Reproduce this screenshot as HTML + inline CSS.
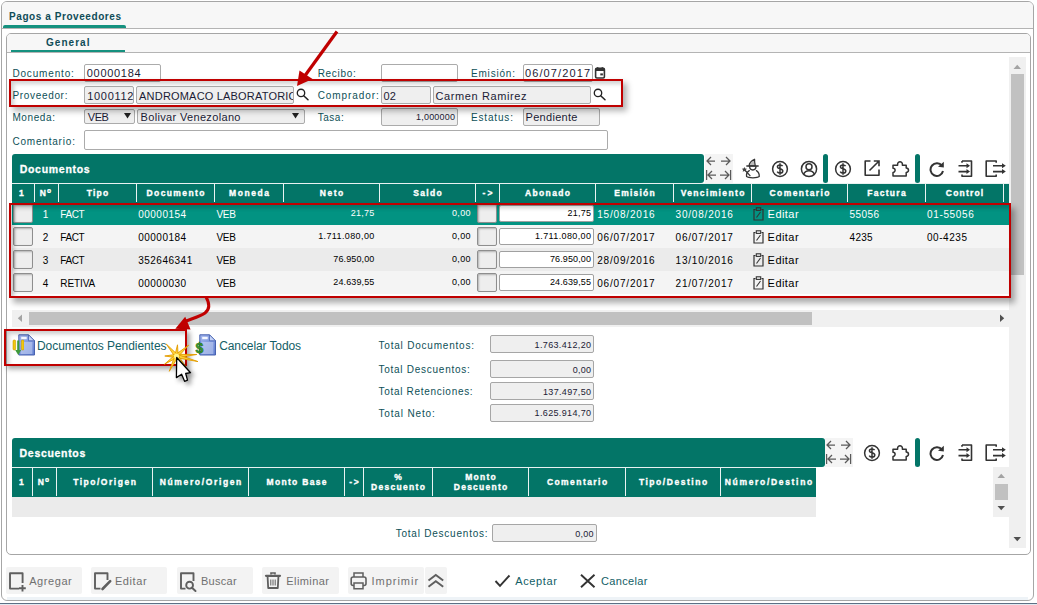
<!DOCTYPE html><html><head><meta charset="utf-8"><style>
html,body{margin:0;padding:0;background:#fff;width:1037px;height:605px;overflow:hidden;position:relative}
body>div,body>svg{position:absolute}
div{box-sizing:border-box}
.t{white-space:pre;font-family:"Liberation Sans",sans-serif}
</style></head><body>
<div style="position:absolute;left:1px;top:1px;width:1033px;height:600px;border:1px solid #a6a6a6;border-radius:6px;background:#fff;box-sizing:border-box"></div>
<div style="position:absolute;left:2px;top:2px;width:1031px;height:26px;background:#f7f7f7;border-radius:5px 5px 0 0"></div>
<div style="position:absolute;left:2px;top:28px;width:1031px;height:1px;background:#b4b4b4"></div>
<div style="position:absolute;left:3px;top:25px;width:123px;height:3px;background:#15917f;border-radius:2px 2px 0 0"></div>
<div class="t" style="position:absolute;left:9.00px;top:11.54px;font-size:10px;line-height:10px;font-weight:bold;color:#0f4c57;letter-spacing:0.572px;">Pagos a Proveedores</div>
<div style="position:absolute;left:7px;top:597px;width:1021px;height:3px;background:#eef3f7"></div>
<div style="position:absolute;left:0px;top:603px;width:1037px;height:1px;background:#5d7085"></div>
<div style="position:absolute;left:0px;top:604px;width:1037px;height:1px;background:#e2e9f0"></div>
<div style="position:absolute;left:0px;top:601px;width:1037px;height:2px;background:#ffffff"></div>
<div style="position:absolute;left:6px;top:33px;width:1025px;height:522px;border:1px solid #a6a6a6;border-radius:5px;background:#fff;box-sizing:border-box"></div>
<div style="position:absolute;left:7px;top:34px;width:1023px;height:18px;background:#f7f7f7;border-radius:4px 4px 0 0"></div>
<div style="position:absolute;left:7px;top:52px;width:1023px;height:1px;background:#b4b4b4"></div>
<div style="position:absolute;left:11px;top:50px;width:114px;height:2px;background:#15917f"></div>
<div class="t" style="position:absolute;left:46.00px;top:38.24px;font-size:10px;line-height:10px;font-weight:bold;color:#0f4c57;letter-spacing:1.042px;">General</div>
<div class="t" style="position:absolute;left:12.40px;top:69.33px;font-size:10px;line-height:10px;font-weight:normal;color:#0d5057;letter-spacing:0.844px;">Documento:</div>
<div class="t" style="position:absolute;left:12.40px;top:91.33px;font-size:10px;line-height:10px;font-weight:normal;color:#0d5057;letter-spacing:0.678px;">Proveedor:</div>
<div class="t" style="position:absolute;left:12.40px;top:113.44px;font-size:10px;line-height:10px;font-weight:normal;color:#0d5057;letter-spacing:0.600px;">Moneda:</div>
<div class="t" style="position:absolute;left:12.40px;top:136.53px;font-size:10px;line-height:10px;font-weight:normal;color:#0d5057;letter-spacing:0.805px;">Comentario:</div>
<div class="t" style="position:absolute;left:317.70px;top:69.33px;font-size:10px;line-height:10px;font-weight:normal;color:#0d5057;letter-spacing:0.683px;">Recibo:</div>
<div class="t" style="position:absolute;left:317.70px;top:91.33px;font-size:10px;line-height:10px;font-weight:normal;color:#0d5057;letter-spacing:0.911px;">Comprador:</div>
<div class="t" style="position:absolute;left:317.70px;top:113.44px;font-size:10px;line-height:10px;font-weight:normal;color:#0d5057;letter-spacing:0.525px;">Tasa:</div>
<div class="t" style="position:absolute;left:471.00px;top:69.33px;font-size:10px;line-height:10px;font-weight:normal;color:#0d5057;letter-spacing:0.807px;">Emisión:</div>
<div class="t" style="position:absolute;left:471.00px;top:113.44px;font-size:10px;line-height:10px;font-weight:normal;color:#0d5057;letter-spacing:0.836px;">Estatus:</div>
<div style="position:absolute;left:84px;top:64px;width:77px;height:18px;border:1px solid #ababab;border-radius:2px;background:#fff"></div>
<div class="t" style="position:absolute;left:86.80px;top:68.49px;font-size:11px;line-height:11px;font-weight:normal;color:#1b1b35;letter-spacing:0.693px;">00000184</div>
<div style="position:absolute;left:381px;top:64px;width:77px;height:18px;border:1px solid #ababab;border-radius:2px;background:#fff"></div>
<div style="position:absolute;left:523px;top:64px;width:70px;height:18px;border:1px solid #ababab;border-radius:2px;background:#fff"></div>
<div class="t" style="position:absolute;left:525.00px;top:68.49px;font-size:11px;line-height:11px;font-weight:normal;color:#1b1b35;letter-spacing:1.106px;">06/07/2017</div>
<svg style="position:absolute;left:594px;top:66px;" width="13" height="14" viewBox="0 0 13 14"><rect x="1.6" y="2.4" width="8.8" height="9.6" rx="1.2" fill="none" stroke="#333" stroke-width="1.6"/><rect x="1.6" y="2.4" width="8.8" height="2.6" fill="#333"/><rect x="2.8" y="1.2" width="1.6" height="2" fill="#333"/><rect x="7.6" y="1.2" width="1.6" height="2" fill="#333"/><rect x="6.3" y="7.4" width="2.6" height="2" fill="#333"/></svg>
<div style="position:absolute;left:84px;top:86px;width:50px;height:18px;border:1px solid #ababab;border-radius:2px;background:#efefef"></div>
<div style="position:absolute;left:85px;top:87px;width:48px;height:16px;overflow:hidden;">
<div class="t" style="position:absolute;left:2.30px;top:3.69px;font-size:11px;line-height:11px;font-weight:normal;color:#1b1b35;letter-spacing:0.667px;">1000112</div>
</div>
<div style="position:absolute;left:136px;top:86px;width:158px;height:18px;border:1px solid #ababab;border-radius:2px;background:#efefef"></div>
<div style="position:absolute;left:137px;top:87px;width:156px;height:16px;overflow:hidden;">
<div class="t" style="position:absolute;left:2.10px;top:3.69px;font-size:11px;line-height:11px;font-weight:normal;color:#1b1b35;letter-spacing:0.188px;">ANDROMACO LABORATORIO</div>
</div>
<svg style="position:absolute;left:296px;top:87px;" width="14" height="15" viewBox="0 0 14 15"><circle cx="5" cy="5.9" r="3.7" fill="none" stroke="#222" stroke-width="1.35"/><line x1="7.7" y1="8.7" x2="12" y2="12.8" stroke="#222" stroke-width="1.5" stroke-linecap="round"/></svg>
<div style="position:absolute;left:381px;top:86px;width:50px;height:18px;border:1px solid #ababab;border-radius:2px;background:#efefef"></div>
<div class="t" style="position:absolute;left:383.50px;top:90.69px;font-size:11px;line-height:11px;font-weight:normal;color:#1b1b35;letter-spacing:0.250px;">02</div>
<div style="position:absolute;left:433px;top:86px;width:158px;height:18px;border:1px solid #ababab;border-radius:2px;background:#efefef"></div>
<div class="t" style="position:absolute;left:435.50px;top:90.69px;font-size:11px;line-height:11px;font-weight:normal;color:#1b1b35;letter-spacing:0.604px;">Carmen Ramirez</div>
<svg style="position:absolute;left:593.4px;top:87.2px;" width="14" height="15" viewBox="0 0 14 15"><circle cx="5" cy="5.9" r="3.7" fill="none" stroke="#222" stroke-width="1.35"/><line x1="7.7" y1="8.7" x2="12" y2="12.8" stroke="#222" stroke-width="1.5" stroke-linecap="round"/></svg>
<div style="position:absolute;left:84px;top:109px;width:51px;height:15px;border:1px solid #ababab;border-radius:2px;background:#efefef"></div>
<div class="t" style="position:absolute;left:87.80px;top:112.09px;font-size:11px;line-height:11px;font-weight:normal;color:#1b1b35;letter-spacing:-0.500px;">VEB</div>
<svg style="position:absolute;left:124px;top:112px;" width="7" height="7" viewBox="0 0 7 7"><path d="M0 1 L7 1 L3.5 6.5 Z" fill="#222"/></svg>
<div style="position:absolute;left:137px;top:109px;width:168px;height:15px;border:1px solid #ababab;border-radius:2px;background:#efefef"></div>
<div class="t" style="position:absolute;left:140.50px;top:112.09px;font-size:11px;line-height:11px;font-weight:normal;color:#1b1b35;letter-spacing:0.341px;">Bolivar Venezolano</div>
<svg style="position:absolute;left:292px;top:112px;" width="7" height="7" viewBox="0 0 7 7"><path d="M0 1 L7 1 L3.5 6.5 Z" fill="#222"/></svg>
<div style="position:absolute;left:381px;top:108px;width:77px;height:18px;border:1px solid #ababab;border-radius:2px;background:#efefef"></div>
<div class="t" style="position:absolute;left:416.00px;top:112.88px;font-size:9px;line-height:9px;font-weight:normal;color:#1b1b35;letter-spacing:0.207px;">1,000000</div>
<div style="position:absolute;left:523px;top:108px;width:77px;height:18px;border:1px solid #ababab;border-radius:2px;background:#efefef"></div>
<div class="t" style="position:absolute;left:525.50px;top:112.09px;font-size:11px;line-height:11px;font-weight:normal;color:#1b1b35;letter-spacing:0.306px;">Pendiente</div>
<div style="position:absolute;left:84px;top:130px;width:524px;height:20px;border:1px solid #ababab;border-radius:2px;background:#fff"></div>
<div style="position:absolute;left:12px;top:154px;width:692px;height:29px;background:#037567;border-radius:3px 3px 3px 0"></div>
<div class="t" style="position:absolute;left:19.70px;top:164.21px;font-size:10.5px;line-height:10.5px;font-weight:bold;color:#fff;letter-spacing:0.711px;-webkit-text-stroke:0.3px #fff">Documentos</div>
<div style="position:absolute;left:704.5px;top:154px;width:28.0px;height:29px;background:#f4f4f4"></div>
<svg style="position:absolute;left:704.5px;top:154px;" width="28" height="29" viewBox="0 0 28 29"><g stroke="#5a5a5a" stroke-width="1.25" fill="none" stroke-linecap="butt"><path d="M2 7 H10 M6 3 L2 7 L6 11"/><path d="M16 7 H25 M21 3 L25 7 L21 11"/><path d="M1.6 16 V26 M3 21 H11 M7 17 L3 21 L7 25"/><path d="M15 21 H24 M20 17 L24 21 L20 25 M25.6 16 V26"/></g></svg>
<svg style="position:absolute;left:735.0px;top:154px;" width="30" height="28" viewBox="0 0 30 28"><path d="M14 11.8 C14.3 9 15.8 6.8 19.6 5.2 C19.4 7.6 19.8 9.6 20.3 11.8 Z" fill="#bdbdbd" stroke="#333" stroke-width="1.2" stroke-linejoin="round"/><g fill="none" stroke="#333" stroke-width="1.3" stroke-linejoin="round" stroke-linecap="round"><path d="M11.8 12 H23.2"/><path d="M14.6 12.3 C14.6 17.2 21 17.2 21 12.3"/><path d="M14.3 16.6 C12.2 17.8 11.2 20.2 11.6 22.6 C13.5 24.2 22.3 24.2 24.2 22.6 C24.4 20.2 23.5 17.8 21.4 16.6"/><path d="M9.5 15.6 L15 21.6"/></g><path d="M9.4 13 L10.2 14.6 L12 14.8 L10.7 16 L11.1 17.8 L9.4 16.9 L7.7 17.8 L8.1 16 L6.8 14.8 L8.6 14.6 Z" fill="#444"/></svg>
<svg style="position:absolute;left:770.6px;top:159.6px;" width="18" height="18" viewBox="0 0 18 18"><circle cx="9" cy="9" r="7.4" fill="none" stroke="#333" stroke-width="1.5"/><path d="M11.6 6.2 C11 5 9.9 4.9 8.9 4.9 C7.3 4.9 6.4 5.8 6.4 6.9 C6.4 9.2 11.8 8.4 11.8 11 C11.8 12.2 10.8 13.1 9 13.1 C7.8 13.1 6.8 12.6 6.2 11.6 M9 3.3 V14.7" fill="none" stroke="#333" stroke-width="1.5"/></svg>
<svg style="position:absolute;left:799.5px;top:159.6px;" width="18" height="18" viewBox="0 0 18 18"><circle cx="9" cy="9" r="7.6" fill="none" stroke="#333" stroke-width="1.5"/><circle cx="9" cy="6.8" r="3" fill="none" stroke="#333" stroke-width="1.5"/><path d="M3.6 14.2 C4.6 11.8 6.8 10.8 9 10.8 C11.2 10.8 13.4 11.8 14.4 14.2" fill="none" stroke="#333" stroke-width="1.5"/></svg>
<div style="position:absolute;left:823px;top:154px;width:5px;height:29px;background:#037567;border-radius:2.5px"></div>
<svg style="position:absolute;left:833.7px;top:159.5px;" width="18" height="18" viewBox="0 0 18 18"><circle cx="9" cy="9" r="7.4" fill="none" stroke="#333" stroke-width="1.5"/><path d="M11.6 6.2 C11 5 9.9 4.9 8.9 4.9 C7.3 4.9 6.4 5.8 6.4 6.9 C6.4 9.2 11.8 8.4 11.8 11 C11.8 12.2 10.8 13.1 9 13.1 C7.8 13.1 6.8 12.6 6.2 11.6 M9 3.3 V14.7" fill="none" stroke="#333" stroke-width="1.5"/></svg>
<svg style="position:absolute;left:863.5px;top:160px;" width="17" height="17" viewBox="0 0 17 17"><path d="M6.5 1 H1.2 V15.2 H15 V9.5" fill="none" stroke="#333" stroke-width="1.6" stroke-linejoin="round"/><path d="M5.5 10.5 L14.8 1.2 M9.8 1 H15 V6.2" fill="none" stroke="#333" stroke-width="1.6"/></svg>
<svg style="position:absolute;left:892px;top:160px;" width="19" height="17" viewBox="0 0 19 17"><path d="M1 5.2 H5.6 V4.2 A2.4 2.4 0 1 1 10.4 4.2 V5.2 H14.2 V7.9 A2.3 2.3 0 1 1 14.2 12.5 V16 H1 V12.4 A2.1 2.1 0 0 0 1 8.2 Z" fill="none" stroke="#333" stroke-width="1.5" stroke-linejoin="round"/></svg>
<div style="position:absolute;left:915px;top:154px;width:5px;height:29px;background:#037567;border-radius:2.5px"></div>
<svg style="position:absolute;left:929px;top:161px;" width="16" height="16" viewBox="0 0 16 16"><path d="M13 5 A6.3 6.3 0 1 0 14 10" fill="none" stroke="#333" stroke-width="2"/><path d="M9 5.8 L14.8 0.8 L14.8 6.5 Z" fill="#333"/></svg>
<svg style="position:absolute;left:957.5px;top:160px;" width="15" height="18" viewBox="0 0 15 18"><path d="M4 1 H13.5 V16.2 H4 V14.5" fill="none" stroke="#333" stroke-width="1.6" stroke-linejoin="round"/><path d="M4 1 V2.8" stroke="#333" stroke-width="1.6"/><path d="M0.5 5.8 H9.5 M0.5 11.6 H9.5" stroke="#333" stroke-width="1.6"/><path d="M8.5 3.3 L12 5.8 L8.5 8.3 Z M8.5 9.1 L12 11.6 L8.5 14.1 Z" fill="#333"/></svg>
<svg style="position:absolute;left:984.5px;top:160px;" width="22" height="18" viewBox="0 0 22 18"><path d="M11.2 2.8 V1 H1.2 V16.2 H11.2 V14.5" fill="none" stroke="#333" stroke-width="1.6" stroke-linejoin="round"/><path d="M8 5.8 H17.5 M8 11.6 H17.5" stroke="#333" stroke-width="1.6"/><path d="M17 3.3 L20.8 5.8 L17 8.3 Z M17 9.1 L20.8 11.6 L17 14.1 Z" fill="#333"/></svg>
<div style="position:absolute;left:12px;top:183px;width:997px;height:20px;background:#037567"></div>
<div style="position:absolute;left:12px;top:183px;width:997px;height:1px;background:#e8f2f1"></div>
<div style="position:absolute;left:34px;top:184px;width:1px;height:18px;background:#e9f3f2"></div>
<div style="position:absolute;left:58px;top:184px;width:1px;height:18px;background:#e9f3f2"></div>
<div style="position:absolute;left:136px;top:184px;width:1px;height:18px;background:#e9f3f2"></div>
<div style="position:absolute;left:214px;top:184px;width:1px;height:18px;background:#e9f3f2"></div>
<div style="position:absolute;left:283px;top:184px;width:1px;height:18px;background:#e9f3f2"></div>
<div style="position:absolute;left:379px;top:184px;width:1px;height:18px;background:#e9f3f2"></div>
<div style="position:absolute;left:475px;top:184px;width:1px;height:18px;background:#e9f3f2"></div>
<div style="position:absolute;left:499px;top:184px;width:1px;height:18px;background:#e9f3f2"></div>
<div style="position:absolute;left:595px;top:184px;width:1px;height:18px;background:#e9f3f2"></div>
<div style="position:absolute;left:673px;top:184px;width:1px;height:18px;background:#e9f3f2"></div>
<div style="position:absolute;left:751px;top:184px;width:1px;height:18px;background:#e9f3f2"></div>
<div style="position:absolute;left:847px;top:184px;width:1px;height:18px;background:#e9f3f2"></div>
<div style="position:absolute;left:925px;top:184px;width:1px;height:18px;background:#e9f3f2"></div>
<div style="position:absolute;left:1003px;top:184px;width:1px;height:18px;background:#e9f3f2"></div>
<div class="t" style="position:absolute;left:19.02px;top:189.40px;font-size:8.5px;line-height:8.5px;font-weight:bold;color:#fff;letter-spacing:0.000px;-webkit-text-stroke:0.35px #fff">1</div>
<div class="t" style="position:absolute;left:39.80px;top:189.40px;font-size:8.5px;line-height:8.5px;font-weight:bold;color:#fff;letter-spacing:0.000px;-webkit-text-stroke:0.35px #fff">N</div>
<div class="t" style="position:absolute;left:47.00px;top:188.29px;font-size:11px;line-height:11px;font-weight:bold;color:#fff;letter-spacing:0.000px;-webkit-text-stroke:0.2px #fff">º</div>
<div class="t" style="position:absolute;left:86.85px;top:189.40px;font-size:8.5px;line-height:8.5px;font-weight:bold;color:#fff;letter-spacing:1.167px;-webkit-text-stroke:0.35px #fff">Tipo</div>
<div class="t" style="position:absolute;left:146.50px;top:189.40px;font-size:8.5px;line-height:8.5px;font-weight:bold;color:#fff;letter-spacing:1.406px;-webkit-text-stroke:0.35px #fff">Documento</div>
<div class="t" style="position:absolute;left:229.00px;top:189.40px;font-size:8.5px;line-height:8.5px;font-weight:bold;color:#fff;letter-spacing:1.560px;-webkit-text-stroke:0.35px #fff">Moneda</div>
<div class="t" style="position:absolute;left:319.75px;top:189.40px;font-size:8.5px;line-height:8.5px;font-weight:bold;color:#fff;letter-spacing:1.533px;-webkit-text-stroke:0.35px #fff">Neto</div>
<div class="t" style="position:absolute;left:413.30px;top:189.40px;font-size:8.5px;line-height:8.5px;font-weight:bold;color:#fff;letter-spacing:1.312px;-webkit-text-stroke:0.35px #fff">Saldo</div>
<div class="t" style="position:absolute;left:482.50px;top:189.40px;font-size:8.5px;line-height:8.5px;font-weight:bold;color:#fff;letter-spacing:2.200px;-webkit-text-stroke:0.35px #fff">-></div>
<div class="t" style="position:absolute;left:525.00px;top:189.40px;font-size:8.5px;line-height:8.5px;font-weight:bold;color:#fff;letter-spacing:1.358px;-webkit-text-stroke:0.35px #fff">Abonado</div>
<div class="t" style="position:absolute;left:614.35px;top:189.40px;font-size:8.5px;line-height:8.5px;font-weight:bold;color:#fff;letter-spacing:1.208px;-webkit-text-stroke:0.35px #fff">Emisión</div>
<div class="t" style="position:absolute;left:680.65px;top:189.40px;font-size:8.5px;line-height:8.5px;font-weight:bold;color:#fff;letter-spacing:1.365px;-webkit-text-stroke:0.35px #fff">Vencimiento</div>
<div class="t" style="position:absolute;left:769.50px;top:189.40px;font-size:8.5px;line-height:8.5px;font-weight:bold;color:#fff;letter-spacing:1.417px;-webkit-text-stroke:0.35px #fff">Comentario</div>
<div class="t" style="position:absolute;left:867.25px;top:189.40px;font-size:8.5px;line-height:8.5px;font-weight:bold;color:#fff;letter-spacing:1.283px;-webkit-text-stroke:0.35px #fff">Factura</div>
<div class="t" style="position:absolute;left:945.80px;top:189.40px;font-size:8.5px;line-height:8.5px;font-weight:bold;color:#fff;letter-spacing:1.200px;-webkit-text-stroke:0.35px #fff">Control</div>
<div style="position:absolute;left:12px;top:203px;width:997px;height:22px;background:#029382"></div>
<div style="position:absolute;left:13px;top:204px;width:20px;height:19px;border:1px solid #8e8e8e;border-radius:2px;background:#eeeeee;box-shadow:inset 1px 1px 2px rgba(0,0,0,0.25)"></div>
<div class="t" style="position:absolute;left:42.65px;top:209.53px;font-size:10px;line-height:10px;font-weight:normal;color:#fff;letter-spacing:0.000px;">1</div>
<div class="t" style="position:absolute;left:60.30px;top:209.53px;font-size:10px;line-height:10px;font-weight:normal;color:#fff;letter-spacing:-0.417px;">FACT</div>
<div class="t" style="position:absolute;left:138.20px;top:209.53px;font-size:10px;line-height:10px;font-weight:normal;color:#fff;letter-spacing:0.500px;">00000154</div>
<div class="t" style="position:absolute;left:216.40px;top:209.53px;font-size:10px;line-height:10px;font-weight:normal;color:#fff;letter-spacing:-0.250px;">VEB</div>
<div class="t" style="position:absolute;left:350.70px;top:208.88px;font-size:9px;line-height:9px;font-weight:normal;color:#fff;letter-spacing:0.275px;">21,75</div>
<div class="t" style="position:absolute;left:451.90px;top:208.88px;font-size:9px;line-height:9px;font-weight:normal;color:#fff;letter-spacing:0.367px;">0,00</div>
<div style="position:absolute;left:477px;top:204px;width:20px;height:19px;border:1px solid #8e8e8e;border-radius:2px;background:#eeeeee;box-shadow:inset 1px 1px 2px rgba(0,0,0,0.25)"></div>
<div style="position:absolute;left:499px;top:205px;width:95px;height:17px;border:1px solid #a0a0a0;border-radius:2px;background:#fff"></div>
<div class="t" style="position:absolute;left:567.40px;top:208.88px;font-size:9px;line-height:9px;font-weight:normal;color:#000;letter-spacing:0.275px;">21,75</div>
<div class="t" style="position:absolute;left:597.20px;top:209.53px;font-size:10px;line-height:10px;font-weight:normal;color:#fff;letter-spacing:0.817px;">15/08/2016</div>
<div class="t" style="position:absolute;left:675.50px;top:209.53px;font-size:10px;line-height:10px;font-weight:normal;color:#fff;letter-spacing:0.817px;">30/08/2016</div>
<svg style="position:absolute;left:752.5px;top:207px;" width="11" height="14" viewBox="0 0 11 14"><path d="M2.5 2.5 H1 V13 H10 V2.5 H8.5" fill="none" stroke="#333" stroke-width="1.2"/><rect x="3.3" y="0.8" width="4.4" height="2.6" fill="none" stroke="#333" stroke-width="1.1"/><path d="M3.5 10.5 L7.5 5" stroke="#333" stroke-width="1.1"/></svg>
<div class="t" style="position:absolute;left:767.60px;top:209.19px;font-size:11px;line-height:11px;font-weight:normal;color:#fff;letter-spacing:0.450px;">Editar</div>
<div class="t" style="position:absolute;left:849.60px;top:209.53px;font-size:10px;line-height:10px;font-weight:normal;color:#fff;letter-spacing:0.400px;">55056</div>
<div class="t" style="position:absolute;left:927.00px;top:209.53px;font-size:10px;line-height:10px;font-weight:normal;color:#fff;letter-spacing:0.650px;">01-55056</div>
<div style="position:absolute;left:12px;top:225px;width:997px;height:23px;background:#f4f4f4"></div>
<div style="position:absolute;left:13px;top:227px;width:20px;height:19px;border:1px solid #8e8e8e;border-radius:2px;background:#eeeeee;box-shadow:inset 1px 1px 2px rgba(0,0,0,0.25)"></div>
<div class="t" style="position:absolute;left:42.65px;top:232.53px;font-size:10px;line-height:10px;font-weight:normal;color:#000;letter-spacing:0.000px;">2</div>
<div class="t" style="position:absolute;left:60.30px;top:232.53px;font-size:10px;line-height:10px;font-weight:normal;color:#000;letter-spacing:-0.417px;">FACT</div>
<div class="t" style="position:absolute;left:138.20px;top:232.53px;font-size:10px;line-height:10px;font-weight:normal;color:#000;letter-spacing:0.500px;">00000184</div>
<div class="t" style="position:absolute;left:216.40px;top:232.53px;font-size:10px;line-height:10px;font-weight:normal;color:#000;letter-spacing:-0.250px;">VEB</div>
<div class="t" style="position:absolute;left:318.20px;top:231.88px;font-size:9px;line-height:9px;font-weight:normal;color:#000;letter-spacing:0.382px;">1.711.080,00</div>
<div class="t" style="position:absolute;left:451.90px;top:231.88px;font-size:9px;line-height:9px;font-weight:normal;color:#000;letter-spacing:0.367px;">0,00</div>
<div style="position:absolute;left:477px;top:227px;width:20px;height:19px;border:1px solid #8e8e8e;border-radius:2px;background:#eeeeee;box-shadow:inset 1px 1px 2px rgba(0,0,0,0.25)"></div>
<div style="position:absolute;left:499px;top:228px;width:95px;height:17px;border:1px solid #a0a0a0;border-radius:2px;background:#fff"></div>
<div class="t" style="position:absolute;left:534.90px;top:231.88px;font-size:9px;line-height:9px;font-weight:normal;color:#000;letter-spacing:0.382px;">1.711.080,00</div>
<div class="t" style="position:absolute;left:597.20px;top:232.53px;font-size:10px;line-height:10px;font-weight:normal;color:#000;letter-spacing:0.817px;">06/07/2017</div>
<div class="t" style="position:absolute;left:675.50px;top:232.53px;font-size:10px;line-height:10px;font-weight:normal;color:#000;letter-spacing:0.817px;">06/07/2017</div>
<svg style="position:absolute;left:752.5px;top:230px;" width="11" height="14" viewBox="0 0 11 14"><path d="M2.5 2.5 H1 V13 H10 V2.5 H8.5" fill="none" stroke="#333" stroke-width="1.2"/><rect x="3.3" y="0.8" width="4.4" height="2.6" fill="none" stroke="#333" stroke-width="1.1"/><path d="M3.5 10.5 L7.5 5" stroke="#333" stroke-width="1.1"/></svg>
<div class="t" style="position:absolute;left:767.60px;top:232.19px;font-size:11px;line-height:11px;font-weight:normal;color:#000;letter-spacing:0.450px;">Editar</div>
<div class="t" style="position:absolute;left:849.60px;top:232.53px;font-size:10px;line-height:10px;font-weight:normal;color:#000;letter-spacing:0.250px;">4235</div>
<div class="t" style="position:absolute;left:927.00px;top:232.53px;font-size:10px;line-height:10px;font-weight:normal;color:#000;letter-spacing:0.550px;">00-4235</div>
<div style="position:absolute;left:12px;top:248px;width:997px;height:23px;background:#ebebeb"></div>
<div style="position:absolute;left:13px;top:250px;width:20px;height:19px;border:1px solid #8e8e8e;border-radius:2px;background:#eeeeee;box-shadow:inset 1px 1px 2px rgba(0,0,0,0.25)"></div>
<div class="t" style="position:absolute;left:42.65px;top:255.53px;font-size:10px;line-height:10px;font-weight:normal;color:#000;letter-spacing:0.000px;">3</div>
<div class="t" style="position:absolute;left:60.30px;top:255.53px;font-size:10px;line-height:10px;font-weight:normal;color:#000;letter-spacing:-0.417px;">FACT</div>
<div class="t" style="position:absolute;left:138.20px;top:255.53px;font-size:10px;line-height:10px;font-weight:normal;color:#000;letter-spacing:0.494px;">352646341</div>
<div class="t" style="position:absolute;left:216.40px;top:255.53px;font-size:10px;line-height:10px;font-weight:normal;color:#000;letter-spacing:-0.250px;">VEB</div>
<div class="t" style="position:absolute;left:333.30px;top:254.88px;font-size:9px;line-height:9px;font-weight:normal;color:#000;letter-spacing:0.119px;">76.950,00</div>
<div class="t" style="position:absolute;left:451.90px;top:254.88px;font-size:9px;line-height:9px;font-weight:normal;color:#000;letter-spacing:0.367px;">0,00</div>
<div style="position:absolute;left:477px;top:250px;width:20px;height:19px;border:1px solid #8e8e8e;border-radius:2px;background:#eeeeee;box-shadow:inset 1px 1px 2px rgba(0,0,0,0.25)"></div>
<div style="position:absolute;left:499px;top:251px;width:95px;height:17px;border:1px solid #a0a0a0;border-radius:2px;background:#fff"></div>
<div class="t" style="position:absolute;left:550.00px;top:254.88px;font-size:9px;line-height:9px;font-weight:normal;color:#000;letter-spacing:0.119px;">76.950,00</div>
<div class="t" style="position:absolute;left:597.20px;top:255.53px;font-size:10px;line-height:10px;font-weight:normal;color:#000;letter-spacing:0.817px;">28/09/2016</div>
<div class="t" style="position:absolute;left:675.50px;top:255.53px;font-size:10px;line-height:10px;font-weight:normal;color:#000;letter-spacing:0.817px;">13/10/2016</div>
<svg style="position:absolute;left:752.5px;top:253px;" width="11" height="14" viewBox="0 0 11 14"><path d="M2.5 2.5 H1 V13 H10 V2.5 H8.5" fill="none" stroke="#333" stroke-width="1.2"/><rect x="3.3" y="0.8" width="4.4" height="2.6" fill="none" stroke="#333" stroke-width="1.1"/><path d="M3.5 10.5 L7.5 5" stroke="#333" stroke-width="1.1"/></svg>
<div class="t" style="position:absolute;left:767.60px;top:255.19px;font-size:11px;line-height:11px;font-weight:normal;color:#000;letter-spacing:0.450px;">Editar</div>
<div style="position:absolute;left:12px;top:271px;width:997px;height:23px;background:#f4f4f4"></div>
<div style="position:absolute;left:13px;top:273px;width:20px;height:19px;border:1px solid #8e8e8e;border-radius:2px;background:#eeeeee;box-shadow:inset 1px 1px 2px rgba(0,0,0,0.25)"></div>
<div class="t" style="position:absolute;left:42.65px;top:278.53px;font-size:10px;line-height:10px;font-weight:normal;color:#000;letter-spacing:0.000px;">4</div>
<div class="t" style="position:absolute;left:60.30px;top:278.53px;font-size:10px;line-height:10px;font-weight:normal;color:#000;letter-spacing:-0.080px;">RETIVA</div>
<div class="t" style="position:absolute;left:138.20px;top:278.53px;font-size:10px;line-height:10px;font-weight:normal;color:#000;letter-spacing:0.500px;">00000030</div>
<div class="t" style="position:absolute;left:216.40px;top:278.53px;font-size:10px;line-height:10px;font-weight:normal;color:#000;letter-spacing:-0.250px;">VEB</div>
<div class="t" style="position:absolute;left:333.30px;top:277.88px;font-size:9px;line-height:9px;font-weight:normal;color:#000;letter-spacing:0.119px;">24.639,55</div>
<div class="t" style="position:absolute;left:451.90px;top:277.88px;font-size:9px;line-height:9px;font-weight:normal;color:#000;letter-spacing:0.367px;">0,00</div>
<div style="position:absolute;left:477px;top:273px;width:20px;height:19px;border:1px solid #8e8e8e;border-radius:2px;background:#eeeeee;box-shadow:inset 1px 1px 2px rgba(0,0,0,0.25)"></div>
<div style="position:absolute;left:499px;top:274px;width:95px;height:17px;border:1px solid #a0a0a0;border-radius:2px;background:#fff"></div>
<div class="t" style="position:absolute;left:550.00px;top:277.88px;font-size:9px;line-height:9px;font-weight:normal;color:#000;letter-spacing:0.119px;">24.639,55</div>
<div class="t" style="position:absolute;left:597.20px;top:278.53px;font-size:10px;line-height:10px;font-weight:normal;color:#000;letter-spacing:0.817px;">06/07/2017</div>
<div class="t" style="position:absolute;left:675.50px;top:278.53px;font-size:10px;line-height:10px;font-weight:normal;color:#000;letter-spacing:0.817px;">21/07/2017</div>
<svg style="position:absolute;left:752.5px;top:276px;" width="11" height="14" viewBox="0 0 11 14"><path d="M2.5 2.5 H1 V13 H10 V2.5 H8.5" fill="none" stroke="#333" stroke-width="1.2"/><rect x="3.3" y="0.8" width="4.4" height="2.6" fill="none" stroke="#333" stroke-width="1.1"/><path d="M3.5 10.5 L7.5 5" stroke="#333" stroke-width="1.1"/></svg>
<div class="t" style="position:absolute;left:767.60px;top:278.19px;font-size:11px;line-height:11px;font-weight:normal;color:#000;letter-spacing:0.450px;">Editar</div>
<div style="position:absolute;left:12px;top:310px;width:997px;height:17px;background:#f0f0f0"></div>
<div style="position:absolute;left:29px;top:312px;width:783px;height:13px;background:#c1c1c1"></div>
<svg style="position:absolute;left:17px;top:314px;" width="6" height="9" viewBox="0 0 6 9"><path d="M5 0.5 L5 8 L0.8 4.25 Z" fill="#a3a3a3"/></svg>
<svg style="position:absolute;left:999px;top:314px;" width="6" height="9" viewBox="0 0 6 9"><path d="M1 0.5 L1 8 L5.2 4.25 Z" fill="#505050"/></svg>
<div style="position:absolute;left:1009px;top:57px;width:17px;height:491px;background:#f0f0f0"></div>
<div style="position:absolute;left:1011px;top:74px;width:13px;height:201px;background:#c1c1c1"></div>
<svg style="position:absolute;left:1013px;top:63.5px;" width="9" height="6" viewBox="0 0 9 6"><path d="M0.5 5 L8 5 L4.25 0.8 Z" fill="#a3a3a3"/></svg>
<svg style="position:absolute;left:1013px;top:535.5px;" width="9" height="6" viewBox="0 0 9 6"><path d="M0.5 1 L8 1 L4.25 5.2 Z" fill="#505050"/></svg>
<svg style="position:absolute;left:17.5px;top:334px;" width="18" height="22" viewBox="0 0 18 22"><defs><linearGradient id="pg1" x1="0" y1="0" x2="1" y2="1"><stop offset="0" stop-color="#a3b6ef"/><stop offset="1" stop-color="#5f7dcf"/></linearGradient></defs><path d="M0.8 0.8 H10.5 L16.5 6.8 V21 H0.8 Z" fill="url(#pg1)" stroke="#4862b0" stroke-width="1"/><path d="M10.5 0.8 V6.8 H16.5 Z" fill="#c4d2f7" stroke="#4862b0" stroke-width="0.8" stroke-linejoin="round"/><rect x="3.2" y="2.8" width="5.5" height="2.4" fill="#f4f7ff"/><rect x="2.8" y="8.5" width="11.6" height="1" fill="#d3ddf8"/><rect x="2.8" y="10.5" width="11.6" height="1" fill="#d3ddf8"/><rect x="2.8" y="12.5" width="11.6" height="1" fill="#d3ddf8"/><rect x="2.8" y="14.5" width="11.6" height="1" fill="#d3ddf8"/><rect x="2.8" y="16.5" width="11.6" height="1" fill="#d3ddf8"/><rect x="2.8" y="18.5" width="11.6" height="1" fill="#d3ddf8"/></svg>
<svg style="position:absolute;left:12px;top:339px;" width="12" height="17" viewBox="0 0 12 17"><rect x="1" y="1" width="2.6" height="10" rx="1" fill="#f2c80f" stroke="#c89b00" stroke-width="0.6"/><rect x="9.4" y="1" width="2.6" height="10" rx="1" fill="#f2c80f" stroke="#c89b00" stroke-width="0.6"/><path d="M5.2 1.5 V11 H3.2 L6.2 16 L9.2 11 H7.2 V1.5 Z" fill="#3f9a3a"/></svg>
<div class="t" style="position:absolute;left:37.00px;top:339.74px;font-size:12px;line-height:12px;font-weight:normal;color:#125e66;letter-spacing:-0.062px;">Documentos Pendientes</div>
<svg style="position:absolute;left:199px;top:334px;" width="18" height="22" viewBox="0 0 18 22"><defs><linearGradient id="pg2" x1="0" y1="0" x2="1" y2="1"><stop offset="0" stop-color="#a3b6ef"/><stop offset="1" stop-color="#5f7dcf"/></linearGradient></defs><path d="M0.8 0.8 H10.5 L16.5 6.8 V21 H0.8 Z" fill="url(#pg2)" stroke="#4862b0" stroke-width="1"/><path d="M10.5 0.8 V6.8 H16.5 Z" fill="#c4d2f7" stroke="#4862b0" stroke-width="0.8" stroke-linejoin="round"/><rect x="3.2" y="2.8" width="5.5" height="2.4" fill="#f4f7ff"/><rect x="2.8" y="8.5" width="11.6" height="1" fill="#d3ddf8"/><rect x="2.8" y="10.5" width="11.6" height="1" fill="#d3ddf8"/><rect x="2.8" y="12.5" width="11.6" height="1" fill="#d3ddf8"/><rect x="2.8" y="14.5" width="11.6" height="1" fill="#d3ddf8"/><rect x="2.8" y="16.5" width="11.6" height="1" fill="#d3ddf8"/><rect x="2.8" y="18.5" width="11.6" height="1" fill="#d3ddf8"/></svg>
<svg style="position:absolute;left:195px;top:341px;" width="12" height="13" viewBox="0 0 12 13"><text x="0.5" y="11.5" font-family="Liberation Sans" font-weight="bold" font-size="14" fill="#3d9b2f" stroke="#1f6b1a" stroke-width="0.5">$</text></svg>
<div class="t" style="position:absolute;left:219.20px;top:339.74px;font-size:12px;line-height:12px;font-weight:normal;color:#125e66;letter-spacing:-0.096px;">Cancelar Todos</div>
<div class="t" style="position:absolute;left:378.50px;top:340.63px;font-size:10px;line-height:10px;font-weight:normal;color:#0d5057;letter-spacing:0.794px;">Total Documentos:</div>
<div style="position:absolute;left:490px;top:335px;width:104px;height:18px;border:1px solid #a6a6a6;border-radius:2px;background:#efefef"></div>
<div class="t" style="position:absolute;left:534.60px;top:341.08px;font-size:9px;line-height:9px;font-weight:normal;color:#1b1b35;letter-spacing:0.350px;">1.763.412,20</div>
<div class="t" style="position:absolute;left:378.50px;top:365.43px;font-size:10px;line-height:10px;font-weight:normal;color:#0d5057;letter-spacing:0.737px;">Total Descuentos:</div>
<div style="position:absolute;left:490px;top:360px;width:104px;height:18px;border:1px solid #a6a6a6;border-radius:2px;background:#efefef"></div>
<div class="t" style="position:absolute;left:572.80px;top:365.88px;font-size:9px;line-height:9px;font-weight:normal;color:#1b1b35;letter-spacing:0.233px;">0,00</div>
<div class="t" style="position:absolute;left:378.50px;top:387.23px;font-size:10px;line-height:10px;font-weight:normal;color:#0d5057;letter-spacing:0.697px;">Total Retenciones:</div>
<div style="position:absolute;left:490px;top:382px;width:104px;height:18px;border:1px solid #a6a6a6;border-radius:2px;background:#efefef"></div>
<div class="t" style="position:absolute;left:543.00px;top:387.68px;font-size:9px;line-height:9px;font-weight:normal;color:#1b1b35;letter-spacing:0.328px;">137.497,50</div>
<div class="t" style="position:absolute;left:378.50px;top:409.03px;font-size:10px;line-height:10px;font-weight:normal;color:#0d5057;letter-spacing:0.840px;">Total Neto:</div>
<div style="position:absolute;left:490px;top:404px;width:104px;height:18px;border:1px solid #a6a6a6;border-radius:2px;background:#efefef"></div>
<div class="t" style="position:absolute;left:534.60px;top:409.48px;font-size:9px;line-height:9px;font-weight:normal;color:#1b1b35;letter-spacing:0.350px;">1.625.914,70</div>
<div style="position:absolute;left:12px;top:438px;width:813px;height:29px;background:#037567;border-radius:3px 3px 3px 0"></div>
<div class="t" style="position:absolute;left:19.60px;top:447.91px;font-size:10.5px;line-height:10.5px;font-weight:bold;color:#fff;letter-spacing:0.689px;-webkit-text-stroke:0.3px #fff">Descuentos</div>
<div style="position:absolute;left:825px;top:438px;width:28px;height:29px;background:#f4f4f4"></div>
<svg style="position:absolute;left:825px;top:438px;" width="28" height="29" viewBox="0 0 28 29"><g stroke="#5a5a5a" stroke-width="1.25" fill="none" stroke-linecap="butt"><path d="M2 7 H10 M6 3 L2 7 L6 11"/><path d="M16 7 H25 M21 3 L25 7 L21 11"/><path d="M1.6 16 V26 M3 21 H11 M7 17 L3 21 L7 25"/><path d="M15 21 H24 M20 17 L24 21 L20 25 M25.6 16 V26"/></g></svg>
<svg style="position:absolute;left:862.7px;top:443.6px;" width="18" height="18" viewBox="0 0 18 18"><circle cx="9" cy="9" r="7.4" fill="none" stroke="#333" stroke-width="1.5"/><path d="M11.6 6.2 C11 5 9.9 4.9 8.9 4.9 C7.3 4.9 6.4 5.8 6.4 6.9 C6.4 9.2 11.8 8.4 11.8 11 C11.8 12.2 10.8 13.1 9 13.1 C7.8 13.1 6.8 12.6 6.2 11.6 M9 3.3 V14.7" fill="none" stroke="#333" stroke-width="1.5"/></svg>
<svg style="position:absolute;left:892px;top:444px;" width="19" height="17" viewBox="0 0 19 17"><path d="M1 5.2 H5.6 V4.2 A2.4 2.4 0 1 1 10.4 4.2 V5.2 H14.2 V7.9 A2.3 2.3 0 1 1 14.2 12.5 V16 H1 V12.4 A2.1 2.1 0 0 0 1 8.2 Z" fill="none" stroke="#333" stroke-width="1.5" stroke-linejoin="round"/></svg>
<div style="position:absolute;left:915px;top:438px;width:5px;height:29px;background:#037567;border-radius:2.5px"></div>
<svg style="position:absolute;left:929px;top:445px;" width="16" height="16" viewBox="0 0 16 16"><path d="M13 5 A6.3 6.3 0 1 0 14 10" fill="none" stroke="#333" stroke-width="2"/><path d="M9 5.8 L14.8 0.8 L14.8 6.5 Z" fill="#333"/></svg>
<svg style="position:absolute;left:957.5px;top:444px;" width="15" height="18" viewBox="0 0 15 18"><path d="M4 1 H13.5 V16.2 H4 V14.5" fill="none" stroke="#333" stroke-width="1.6" stroke-linejoin="round"/><path d="M4 1 V2.8" stroke="#333" stroke-width="1.6"/><path d="M0.5 5.8 H9.5 M0.5 11.6 H9.5" stroke="#333" stroke-width="1.6"/><path d="M8.5 3.3 L12 5.8 L8.5 8.3 Z M8.5 9.1 L12 11.6 L8.5 14.1 Z" fill="#333"/></svg>
<svg style="position:absolute;left:984.5px;top:444px;" width="22" height="18" viewBox="0 0 22 18"><path d="M11.2 2.8 V1 H1.2 V16.2 H11.2 V14.5" fill="none" stroke="#333" stroke-width="1.6" stroke-linejoin="round"/><path d="M8 5.8 H17.5 M8 11.6 H17.5" stroke="#333" stroke-width="1.6"/><path d="M17 3.3 L20.8 5.8 L17 8.3 Z M17 9.1 L20.8 11.6 L17 14.1 Z" fill="#333"/></svg>
<div style="position:absolute;left:12px;top:467px;width:804px;height:30px;background:#037567"></div>
<div style="position:absolute;left:12px;top:467px;width:804px;height:1px;background:#e8f2f1"></div>
<div style="position:absolute;left:32px;top:468px;width:1px;height:28px;background:#e9f3f2"></div>
<div style="position:absolute;left:56px;top:468px;width:1px;height:28px;background:#e9f3f2"></div>
<div style="position:absolute;left:152px;top:468px;width:1px;height:28px;background:#e9f3f2"></div>
<div style="position:absolute;left:248px;top:468px;width:1px;height:28px;background:#e9f3f2"></div>
<div style="position:absolute;left:344px;top:468px;width:1px;height:28px;background:#e9f3f2"></div>
<div style="position:absolute;left:363px;top:468px;width:1px;height:28px;background:#e9f3f2"></div>
<div style="position:absolute;left:432px;top:468px;width:1px;height:28px;background:#e9f3f2"></div>
<div style="position:absolute;left:528px;top:468px;width:1px;height:28px;background:#e9f3f2"></div>
<div style="position:absolute;left:625px;top:468px;width:1px;height:28px;background:#e9f3f2"></div>
<div style="position:absolute;left:720px;top:468px;width:1px;height:28px;background:#e9f3f2"></div>
<div class="t" style="position:absolute;left:18.93px;top:478.40px;font-size:8.5px;line-height:8.5px;font-weight:bold;color:#fff;letter-spacing:0.000px;-webkit-text-stroke:0.35px #fff">1</div>
<div class="t" style="position:absolute;left:37.80px;top:478.40px;font-size:8.5px;line-height:8.5px;font-weight:bold;color:#fff;letter-spacing:0.000px;-webkit-text-stroke:0.35px #fff">N</div>
<div class="t" style="position:absolute;left:45.00px;top:477.29px;font-size:11px;line-height:11px;font-weight:bold;color:#fff;letter-spacing:0.000px;-webkit-text-stroke:0.2px #fff">º</div>
<div class="t" style="position:absolute;left:73.15px;top:478.40px;font-size:8.5px;line-height:8.5px;font-weight:bold;color:#fff;letter-spacing:1.515px;-webkit-text-stroke:0.35px #fff">Tipo/Origen</div>
<div class="t" style="position:absolute;left:159.75px;top:478.40px;font-size:8.5px;line-height:8.5px;font-weight:bold;color:#fff;letter-spacing:1.637px;-webkit-text-stroke:0.35px #fff">Número/Origen</div>
<div class="t" style="position:absolute;left:266.55px;top:478.40px;font-size:8.5px;line-height:8.5px;font-weight:bold;color:#fff;letter-spacing:1.306px;-webkit-text-stroke:0.35px #fff">Monto Base</div>
<div class="t" style="position:absolute;left:349.25px;top:478.40px;font-size:8.5px;line-height:8.5px;font-weight:bold;color:#fff;letter-spacing:1.700px;-webkit-text-stroke:0.35px #fff">-></div>
<div class="t" style="position:absolute;left:394.23px;top:473.20px;font-size:8.5px;line-height:8.5px;font-weight:bold;color:#fff;letter-spacing:0.000px;-webkit-text-stroke:0.35px #fff">%</div>
<div class="t" style="position:absolute;left:371.05px;top:483.30px;font-size:8.5px;line-height:8.5px;font-weight:bold;color:#fff;letter-spacing:1.306px;-webkit-text-stroke:0.35px #fff">Descuento</div>
<div class="t" style="position:absolute;left:465.20px;top:473.20px;font-size:8.5px;line-height:8.5px;font-weight:bold;color:#fff;letter-spacing:1.275px;-webkit-text-stroke:0.35px #fff">Monto</div>
<div class="t" style="position:absolute;left:453.75px;top:483.30px;font-size:8.5px;line-height:8.5px;font-weight:bold;color:#fff;letter-spacing:1.256px;-webkit-text-stroke:0.35px #fff">Descuento</div>
<div class="t" style="position:absolute;left:546.90px;top:478.40px;font-size:8.5px;line-height:8.5px;font-weight:bold;color:#fff;letter-spacing:1.439px;-webkit-text-stroke:0.35px #fff">Comentario</div>
<div class="t" style="position:absolute;left:638.90px;top:478.40px;font-size:8.5px;line-height:8.5px;font-weight:bold;color:#fff;letter-spacing:1.536px;-webkit-text-stroke:0.35px #fff">Tipo/Destino</div>
<div class="t" style="position:absolute;left:724.80px;top:478.40px;font-size:8.5px;line-height:8.5px;font-weight:bold;color:#fff;letter-spacing:1.673px;-webkit-text-stroke:0.35px #fff">Número/Destino</div>
<div style="position:absolute;left:12px;top:497px;width:804px;height:20px;background:#ebebeb"></div>
<div style="position:absolute;left:993px;top:467px;width:16px;height:50px;background:#f0f0f0"></div>
<div style="position:absolute;left:995px;top:484px;width:13px;height:16px;background:#c1c1c1"></div>
<svg style="position:absolute;left:997px;top:473px;" width="9" height="6" viewBox="0 0 9 6"><path d="M0.5 5 L8 5 L4.25 0.8 Z" fill="#a3a3a3"/></svg>
<svg style="position:absolute;left:997px;top:505px;" width="9" height="6" viewBox="0 0 9 6"><path d="M0.5 1 L8 1 L4.25 5.2 Z" fill="#505050"/></svg>
<div class="t" style="position:absolute;left:395.70px;top:528.84px;font-size:10px;line-height:10px;font-weight:normal;color:#0d5057;letter-spacing:0.775px;">Total Descuentos:</div>
<div style="position:absolute;left:492px;top:524px;width:105px;height:18px;border:1px solid #a6a6a6;border-radius:2px;background:#efefef"></div>
<div class="t" style="position:absolute;left:575.30px;top:529.68px;font-size:9px;line-height:9px;font-weight:normal;color:#1b1b35;letter-spacing:0.233px;">0,00</div>
<div style="position:absolute;left:6px;top:567px;width:76px;height:27px;background:#f3f3f3;border-radius:2px"></div>
<div style="position:absolute;left:91px;top:567px;width:76px;height:27px;background:#f3f3f3;border-radius:2px"></div>
<div style="position:absolute;left:177px;top:567px;width:76px;height:27px;background:#f3f3f3;border-radius:2px"></div>
<div style="position:absolute;left:262px;top:567px;width:77px;height:27px;background:#f3f3f3;border-radius:2px"></div>
<div style="position:absolute;left:348px;top:567px;width:76px;height:27px;background:#f3f3f3;border-radius:2px"></div>
<div style="position:absolute;left:425px;top:567px;width:22px;height:27px;background:#f3f3f3;border-radius:2px"></div>
<svg style="position:absolute;left:8px;top:571px;" width="20" height="22" viewBox="0 0 20 22"><path d="M14.6 12 V2.2 H2 V17.6 H11" fill="none" stroke="#5f5f5f" stroke-width="1.9" stroke-linejoin="round"/><path d="M14.5 14 V20.5 M11 17.3 H17.8" stroke="#5f5f5f" stroke-width="1.9"/></svg>
<div class="t" style="position:absolute;left:29.20px;top:575.59px;font-size:11px;line-height:11px;font-weight:normal;color:#707070;letter-spacing:0.575px;">Agregar</div>
<svg style="position:absolute;left:93px;top:571px;" width="20" height="22" viewBox="0 0 20 22"><path d="M14.5 9 V2.2 H2 V17.6 H7.5" fill="none" stroke="#5f5f5f" stroke-width="1.9" stroke-linejoin="round"/><path d="M9.5 18 L17.2 10.2" stroke="#5f5f5f" stroke-width="2.6" stroke-linecap="round"/></svg>
<div class="t" style="position:absolute;left:114.90px;top:575.59px;font-size:11px;line-height:11px;font-weight:normal;color:#707070;letter-spacing:0.590px;">Editar</div>
<svg style="position:absolute;left:179px;top:571px;" width="20" height="22" viewBox="0 0 20 22"><path d="M14.5 10 V2.2 H2 V17.6 H6.5" fill="none" stroke="#5f5f5f" stroke-width="1.9" stroke-linejoin="round"/><circle cx="10.6" cy="14.2" r="3.4" fill="none" stroke="#5f5f5f" stroke-width="1.9"/><path d="M13 16.8 L16.5 20" stroke="#5f5f5f" stroke-width="2" stroke-linecap="round"/></svg>
<div class="t" style="position:absolute;left:200.90px;top:575.59px;font-size:11px;line-height:11px;font-weight:normal;color:#707070;letter-spacing:0.310px;">Buscar</div>
<svg style="position:absolute;left:264px;top:571px;" width="18" height="20" viewBox="0 0 18 20"><path d="M2 4.8 H16" stroke="#5f5f5f" stroke-width="2.2" stroke-linecap="round"/><path d="M7 3.5 V2 H11 V3.5" fill="none" stroke="#5f5f5f" stroke-width="1.6"/><path d="M3.6 6 L4.2 17 H13.8 L14.4 6" fill="none" stroke="#5f5f5f" stroke-width="1.8" stroke-linejoin="round"/><path d="M6.8 8.5 V14.5 M9 8.5 V14.5 M11.2 8.5 V14.5" stroke="#5f5f5f" stroke-width="1"/></svg>
<div class="t" style="position:absolute;left:286.30px;top:575.59px;font-size:11px;line-height:11px;font-weight:normal;color:#707070;letter-spacing:0.407px;">Eliminar</div>
<svg style="position:absolute;left:350px;top:571px;" width="18" height="20" viewBox="0 0 18 20"><path d="M4 6 V2 H13 V6" fill="none" stroke="#5f5f5f" stroke-width="1.5"/><rect x="1.2" y="6" width="14.8" height="8.5" rx="2" fill="none" stroke="#5f5f5f" stroke-width="1.6"/><path d="M4 12 H13 V17.8 H4 Z" fill="#f3f3f3" stroke="#5f5f5f" stroke-width="1.5"/></svg>
<div class="t" style="position:absolute;left:371.50px;top:575.59px;font-size:11px;line-height:11px;font-weight:normal;color:#707070;letter-spacing:0.986px;">Imprimir</div>
<svg style="position:absolute;left:427px;top:573px;" width="18" height="16" viewBox="0 0 18 16"><path d="M1.5 7.5 L8.8 2 L16.2 7.5 M1.5 13.8 L8.8 8.3 L16.2 13.8" fill="none" stroke="#5f5f5f" stroke-width="1.9"/></svg>
<svg style="position:absolute;left:494px;top:574px;" width="17" height="14" viewBox="0 0 17 14"><path d="M1.5 7 L6 11.8 L15.5 1.5" fill="none" stroke="#333" stroke-width="1.9"/></svg>
<div class="t" style="position:absolute;left:515.30px;top:575.79px;font-size:11px;line-height:11px;font-weight:normal;color:#125e66;letter-spacing:0.600px;">Aceptar</div>
<svg style="position:absolute;left:580px;top:574px;" width="16" height="14" viewBox="0 0 16 14"><path d="M1 0.8 L14.5 13.2 M14.5 0.8 L1 13.2" stroke="#333" stroke-width="1.9"/></svg>
<div class="t" style="position:absolute;left:601.00px;top:575.79px;font-size:11px;line-height:11px;font-weight:normal;color:#125e66;letter-spacing:0.343px;">Cancelar</div>
<div style="position:absolute;left:9px;top:79px;width:614px;height:28px;border:2px solid #c00000;box-shadow:4px 4px 6px rgba(0,0,0,0.3), inset 3px 3px 4px rgba(0,0,0,0.18)"></div>
<svg style="position:absolute;left:290px;top:28px;" width="52" height="62" viewBox="0 0 52 62"><line x1="47" y1="3.5" x2="14" y2="49" stroke="#c00000" stroke-width="3.2" stroke-linecap="butt"/><path d="M7 58 L9.5 42.5 L22.5 51 Z" fill="#c00000"/></svg>
<div style="position:absolute;left:9px;top:203px;width:1002px;height:95px;border:2px solid #c00000;box-shadow:4px 5px 6px rgba(0,0,0,0.33), inset 3px 3px 4px rgba(0,0,0,0.2)"></div>
<svg style="position:absolute;left:168px;top:294px;" width="50" height="40" viewBox="0 0 50 40"><path d="M38 3 C42 10 42 15 37 19 C33 22 26 24 18 27" fill="none" stroke="#c00000" stroke-width="3"/><path d="M7.3 34.8 L17.2 22.8 L22.6 35.6 Z" fill="#c00000"/></svg>
<div style="position:absolute;left:4px;top:329px;width:183px;height:37px;border:2px solid #c00000;box-shadow:3px 3px 5px rgba(0,0,0,0.35), inset 3px 3px 4px rgba(0,0,0,0.2)"></div>
<svg style="position:absolute;left:150px;top:335px;" width="55" height="45" viewBox="0 0 55 45"><path d="M28.19 21.15 L27.50 9.80 L24.81 20.85 Z" fill="#ffd53a" stroke="#e29b00" stroke-width="0.9" stroke-linejoin="round"/><path d="M27.79 19.89 L16.30 9.10 L25.21 22.11 Z" fill="#ffd53a" stroke="#e29b00" stroke-width="0.9" stroke-linejoin="round"/><path d="M27.63 22.27 L38.60 10.20 L25.37 19.73 Z" fill="#ffd53a" stroke="#e29b00" stroke-width="0.9" stroke-linejoin="round"/><path d="M26.50 19.30 L14.80 21.00 L26.50 22.70 Z" fill="#ffd53a" stroke="#e29b00" stroke-width="0.9" stroke-linejoin="round"/><path d="M26.63 22.70 L46.80 19.50 L26.37 19.30 Z" fill="#ffd53a" stroke="#e29b00" stroke-width="0.9" stroke-linejoin="round"/><path d="M26.07 22.65 L48.00 26.60 L26.93 19.35 Z" fill="#ffd53a" stroke="#e29b00" stroke-width="0.9" stroke-linejoin="round"/><path d="M25.54 19.60 L14.50 29.20 L27.46 22.40 Z" fill="#ffd53a" stroke="#e29b00" stroke-width="0.9" stroke-linejoin="round"/><path d="M24.96 20.28 L19.30 36.30 L28.04 21.72 Z" fill="#ffd53a" stroke="#e29b00" stroke-width="0.9" stroke-linejoin="round"/><path d="M25.21 22.11 L36.00 32.00 L27.79 19.89 Z" fill="#ffd53a" stroke="#e29b00" stroke-width="0.9" stroke-linejoin="round"/><circle cx="26.5" cy="21" r="2.6" fill="#fff38a"/></svg>
<svg style="position:absolute;left:175px;top:356px;filter:drop-shadow(3px 3px 2.5px rgba(0,0,0,0.45))" width="18" height="28" viewBox="0 0 18 28"><path d="M1.7 1.5 L1.4 21.6 L6.6 18.2 L9.6 25.3 L12.5 24.2 L10.7 17.5 L15.5 16.7 Z" fill="#fff" stroke="#000" stroke-width="1.3" stroke-linejoin="round"/></svg>
</body></html>
